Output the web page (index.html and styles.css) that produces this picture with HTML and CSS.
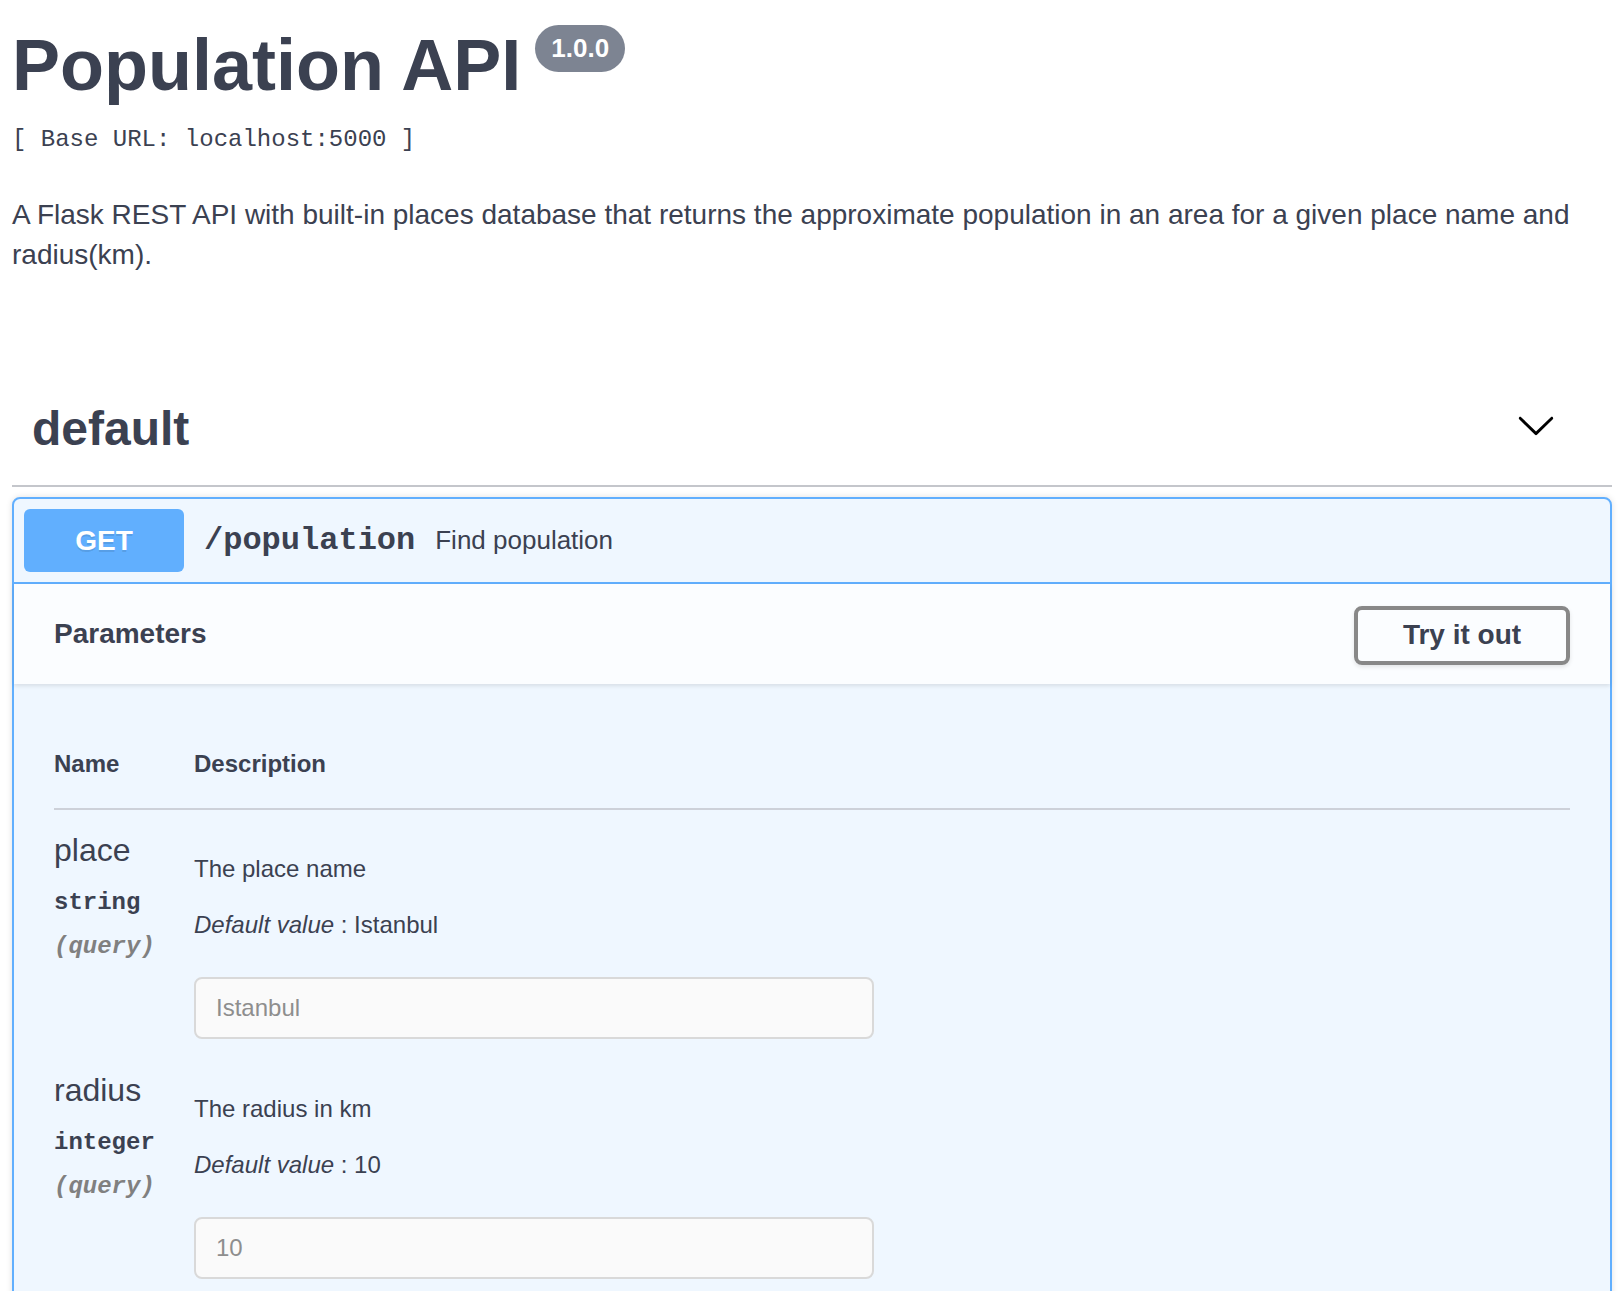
FILE: index.html
```html
<!DOCTYPE html>
<html lang="en">
<head>
<meta charset="utf-8">
<title>Population API</title>
<link rel="stylesheet" href="styles.css">
</head>
<body>
<div class="wrapper">
  <header class="info">
    <h1 class="title"><span class="title-text">Population API</span><span class="version">1.0.0</span></h1>
    <pre class="base-url">[ Base URL: localhost:5000 ]</pre>
    <p class="description">A Flask REST API with built-in places database that returns the approximate population in an area for a given place name and radius(km).</p>
  </header>

  <section class="tag-section">
    <h3 class="tag-head">
      <span class="tag-name">default</span>
      <svg class="chevron" width="40" height="40" viewBox="0 0 20 20" aria-hidden="true"><path d="M17.418 6.109c.272-.268.709-.268.979 0s.271.701 0 .969l-7.908 7.83c-.27.268-.707.268-.979 0l-7.908-7.83c-.27-.268-.27-.701 0-.969.271-.268.709-.268.979 0L10 13.25l7.418-7.141z"/></svg>
    </h3>

    <div class="opblock">
      <div class="summary">
        <span class="method">GET</span>
        <span class="path">/population</span>
        <span class="summary-desc">Find population</span>
      </div>

      <div class="section-header">
        <h4 class="section-title">Parameters</h4>
        <button class="try-btn" type="button">Try it out</button>
      </div>

      <div class="table-container">
        <table class="params">
          <thead>
            <tr>
              <th class="col-name">Name</th>
              <th class="col-desc-head">Description</th>
            </tr>
          </thead>
          <tbody>
            <tr>
              <td class="col-name">
                <div class="param-name">place</div>
                <div class="param-type">string</div>
                <div class="param-in">(query)</div>
              </td>
              <td class="col-desc">
                <p class="desc-line first">The place name</p>
                <p class="desc-line second"><i>Default value</i> : Istanbul</p>
                <input class="param-input" type="text" value="Istanbul" disabled>
              </td>
            </tr>
            <tr>
              <td class="col-name">
                <div class="param-name">radius</div>
                <div class="param-type">integer</div>
                <div class="param-in">(query)</div>
              </td>
              <td class="col-desc">
                <p class="desc-line first">The radius in km</p>
                <p class="desc-line second"><i>Default value</i> : 10</p>
                <input class="param-input" type="text" value="10" disabled>
              </td>
            </tr>
          </tbody>
        </table>
      </div>
    </div>
  </section>
</div>
</body>
</html>
```

FILE: styles.css
```css
* { box-sizing: border-box; }

html, body {
  margin: 0;
  padding: 0;
  background: #ffffff;
}

body {
  font-family: "Liberation Sans", Arial, Helvetica, sans-serif;
  color: #3b4151;
}

.wrapper {
  padding: 0 10px 0 12px;
}

/* ---------- info ---------- */
.info {
  padding-top: 25px;
}

.title {
  display: flex;
  align-items: flex-start;
  margin: 0;
  font-size: 72px;
  line-height: 80px;
  font-weight: 700;
  color: #3b4151;
}

.version {
  margin-left: 14px;
  padding: 0 16px;
  height: 47px;
  line-height: 47px;
  border-radius: 57px;
  background: #7d8492;
  color: #ffffff;
  font-size: 26px;
  font-weight: 700;
}

.base-url {
  margin: 20px 0 0;
  font-family: "Liberation Mono", "Courier New", monospace;
  font-size: 24px;
  line-height: 30px;
  color: #3b4151;
}

.description {
  margin: 40px 0 0;
  font-size: 28px;
  line-height: 40px;
  color: #3b4151;
}

/* ---------- tag ---------- */
.tag-section {
  margin-top: 124px;
}

.tag-head {
  display: flex;
  align-items: center;
  justify-content: space-between;
  margin: 0;
  padding: 0 56px 26px 20px;
  font-size: 48px;
  line-height: 60px;
  font-weight: 700;
  border-bottom: 2px solid #c4c6cb;
}

.chevron {
  display: block;
  margin-top: -8px;
  fill: #000000;
}

/* ---------- opblock ---------- */
.opblock {
  margin-top: 10px;
  border: 2px solid #61affe;
  border-radius: 8px;
  background: #eff7ff;
  box-shadow: 0 0 6px rgba(0, 0, 0, 0.12);
}

.summary {
  display: flex;
  align-items: center;
  padding: 10px;
  border-bottom: 2px solid #61affe;
}

.method {
  min-width: 160px;
  padding: 12px 0;
  border-radius: 6px;
  background: #61affe;
  color: #ffffff;
  font-size: 28px;
  line-height: 39px;
  font-weight: 700;
  text-align: center;
  text-shadow: 0 2px 0 rgba(0, 0, 0, 0.1);
}

.path {
  padding: 0 20px;
  font-family: "Liberation Mono", "Courier New", monospace;
  font-size: 32px;
  font-weight: 700;
  color: #3b4151;
}

.summary-desc {
  font-size: 26px;
  color: #3b4151;
}

.section-header {
  display: flex;
  align-items: center;
  justify-content: space-between;
  min-height: 100px;
  padding: 16px 40px;
  background: #fbfdff;
  box-shadow: 0 2px 4px rgba(0, 0, 0, 0.1);
}

.section-title {
  margin: 0;
  font-size: 28px;
  font-weight: 700;
}

.try-btn {
  width: 216px;
  height: 59px;
  margin-top: 2px;
  padding: 0;
  border: 4px solid #888888;
  border-radius: 8px;
  background: transparent;
  font-family: "Liberation Sans", Arial, sans-serif;
  font-size: 28px;
  font-weight: 700;
  color: #3b4151;
  box-shadow: 0 2px 4px rgba(0, 0, 0, 0.1);
}

/* ---------- params table ---------- */
.table-container {
  padding: 40px 40px 60px;
}

.params {
  width: 100%;
  border-collapse: collapse;
}

.params th {
  padding: 24px 0 28px;
  font-size: 24px;
  line-height: 32px;
  font-weight: 700;
  text-align: left;
  border-bottom: 2px solid #cdd1d9;
}

.params th.col-name,
.params td.col-name {
  width: 140px;
}

.params td {
  padding: 20px 0 0;
  vertical-align: top;
}

.param-name {
  font-size: 32px;
  line-height: 40px;
}

.param-type {
  padding: 16px 0 10px;
  font-family: "Liberation Mono", "Courier New", monospace;
  font-size: 24px;
  line-height: 34px;
  font-weight: 700;
}

.param-in {
  font-family: "Liberation Mono", "Courier New", monospace;
  font-size: 24px;
  line-height: 34px;
  font-style: italic;
  font-weight: 700;
  color: #808080;
}

.col-desc {
  display: flex;
  flex-direction: column;
  align-items: flex-start;
}

.desc-line {
  margin: 0;
  font-size: 24px;
  line-height: 28px;
}

.desc-line.first {
  margin-top: 25px;
}

.desc-line.second {
  margin-top: 28px;
}

.param-input {
  width: 680px;
  height: 62px;
  margin: 38px 0 11px;
  padding: 0 20px;
  border: 2px solid #d9d9d9;
  border-radius: 8px;
  background: #fafafa;
  font-family: "Liberation Sans", Arial, sans-serif;
  font-size: 24px;
  color: #8e8e8e;
  -webkit-text-fill-color: #8e8e8e;
  opacity: 1;
}
```
